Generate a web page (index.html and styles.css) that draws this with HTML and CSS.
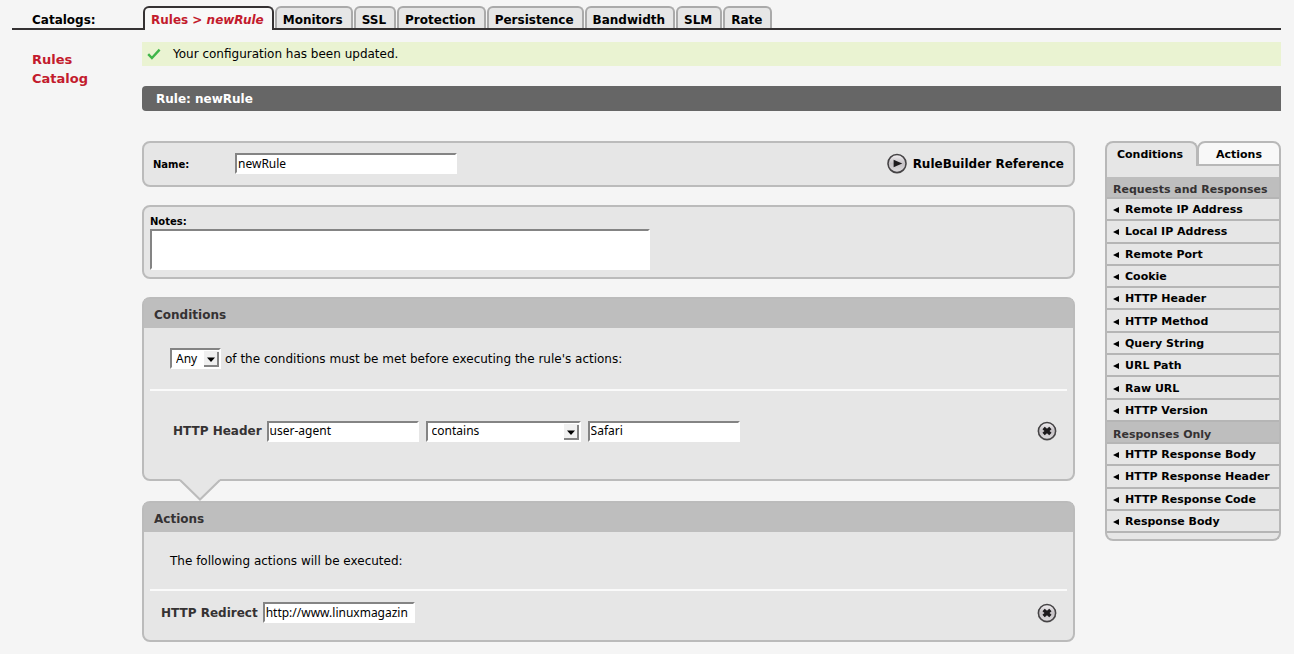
FILE: index.html
```html
<!DOCTYPE html>
<html lang="en">
<head>
    <meta charset="UTF-8">
    <meta name="viewport" content="width=device-width, initial-scale=1.0">
    <title>Rules &gt; newRule</title>
    <link rel="stylesheet" href="styles.css">
</head>
<body>

    <!-- shared icons -->
    <svg class="defs" aria-hidden="true">
        <defs>
            <linearGradient id="knob" x1="0" y1="0" x2="0" y2="1">
                <stop offset="0" stop-color="#f4f2f4"/>
                <stop offset="0.5" stop-color="#c4c0c4"/>
                <stop offset="1" stop-color="#dedcde"/>
            </linearGradient>
            <symbol id="icon-remove" viewBox="0 0 20 20">
                <circle cx="10" cy="10.5" r="9.3" fill="#a8a8a8"/>
                <circle cx="10" cy="10" r="8.6" fill="url(#knob)" stroke="#454345" stroke-width="1.5"/>
                <path d="M6.6 7 L13.4 13 M13.4 7 L6.6 13" stroke="#1c1a1c" stroke-width="3.4"/>
            </symbol>
            <symbol id="icon-play" viewBox="0 0 20 22">
                <circle cx="10" cy="11.3" r="9.4" fill="#999"/>
                <circle cx="10" cy="10.5" r="9" fill="url(#knob)" stroke="#454345" stroke-width="1.5"/>
                <path d="M6.6 6.8 L15.2 10.5 L6.6 14.2 Z" fill="#1c1a1c"/>
            </symbol>
        </defs>
    </svg>

    <nav class="catalogs">
        <span class="catalogs-label">Catalogs:</span>
        <a href="#" class="tab active">Rules &gt; <em>newRule</em></a>
        <a href="#" class="tab">Monitors</a>
        <a href="#" class="tab">SSL</a>
        <a href="#" class="tab">Protection</a>
        <a href="#" class="tab">Persistence</a>
        <a href="#" class="tab">Bandwidth</a>
        <a href="#" class="tab">SLM</a>
        <a href="#" class="tab">Rate</a>
    </nav>

    <div class="page">
        <div class="side-nav"><a href="#">Rules Catalog</a></div>

        <main>
            <div class="message">
                <svg width="14" height="12" viewBox="0 0 14 12" aria-hidden="true"><path d="M1.2 6.2 L4.9 10 L12.6 1.6" fill="none" stroke="#3fb549" stroke-width="2.4"/></svg>
                <span>Your configuration has been updated.</span>
            </div>

            <h1>Rule: newRule</h1>

            <div class="columns">
                <form class="rule">
                    <div class="panel name-panel">
                        <label for="name">Name:</label>
                        <input type="text" id="name" class="name-input" value="newRule">
                        <a href="#" class="reference">
                            <svg width="20" height="22" aria-hidden="true"><use href="#icon-play"/></svg>
                            RuleBuilder Reference
                        </a>
                    </div>

                    <div class="panel notes-panel">
                        <label for="notes">Notes:</label>
                        <textarea id="notes"></textarea>
                    </div>

                    <section class="panel conditions">
                        <h2>Conditions</h2>
                        <div class="intro">
                            <span class="select match">
                                <select id="match">
                                    <option>Any</option>
                                    <option>All</option>
                                </select>
                                <svg width="15" height="16" aria-hidden="true"><path d="M0 0H15V16H0Z" fill="#f0f0f0"/><path d="M13 1H15V16H0V14H13Z" fill="#848484"/><path d="M3 6.5H11L7 11Z"/></svg>
                            </span>
                            <label for="match">of the conditions must be met before executing the rule's actions:</label>
                        </div>
                        <div class="line">
                            <label for="header">HTTP Header</label>
                            <input type="text" id="header" value="user-agent">
                            <span class="select">
                                <select aria-label="Comparison">
                                    <option>contains</option>
                                    <option>equals</option>
                                </select>
                                <svg width="15" height="16" aria-hidden="true"><path d="M0 0H15V16H0Z" fill="#f0f0f0"/><path d="M13 1H15V16H0V14H13Z" fill="#848484"/><path d="M3 6.5H11L7 11Z"/></svg>
                            </span>
                            <input type="text" aria-label="Header value" value="Safari">
                            <button type="button" class="remove" aria-label="Remove condition"><svg width="20" height="20"><use href="#icon-remove"/></svg></button>
                        </div>
                        <svg class="pointer" width="42" height="22" viewBox="0 0 42 22" aria-hidden="true">
                            <path d="M1 0 H41 V2 L21 21 L1 2 Z" fill="#e6e6e6"/>
                            <path d="M1 1 L21 20.5 L41 1" fill="none" stroke="#bbb" stroke-width="2"/>
                        </svg>
                    </section>

                    <section class="panel actions">
                        <h2>Actions</h2>
                        <div class="intro">The following actions will be executed:</div>
                        <div class="line">
                            <label for="redirect">HTTP Redirect</label>
                            <input type="text" id="redirect" value="http://www.linuxmagazin">
                            <button type="button" class="remove" aria-label="Remove action"><svg width="20" height="20"><use href="#icon-remove"/></svg></button>
                        </div>
                    </section>
                </form>

                <aside>
                    <div class="aside-tabs">
                        <button type="button" class="current">Conditions</button>
                        <button type="button">Actions</button>
                    </div>
                    <div class="aside-body">
                        <h3>Requests and Responses</h3>
                        <ul class="requests">
                            <li><a href="#">Remote IP Address</a></li>
                            <li><a href="#">Local IP Address</a></li>
                            <li><a href="#">Remote Port</a></li>
                            <li><a href="#">Cookie</a></li>
                            <li><a href="#">HTTP Header</a></li>
                            <li><a href="#">HTTP Method</a></li>
                            <li><a href="#">Query String</a></li>
                            <li><a href="#">URL Path</a></li>
                            <li><a href="#">Raw URL</a></li>
                            <li><a href="#">HTTP Version</a></li>
                        </ul>
                        <h3>Responses Only</h3>
                        <ul class="responses">
                            <li><a href="#">HTTP Response Body</a></li>
                            <li><a href="#">HTTP Response Header</a></li>
                            <li><a href="#">HTTP Response Code</a></li>
                            <li><a href="#">Response Body</a></li>
                        </ul>
                    </div>
                </aside>
            </div>
        </main>
    </div>

</body>
</html>
```
FILE: styles.css
```css
* { box-sizing: border-box; }
body {
    margin: 0;
    padding: 6px 13px 12px 12px;
    background-color: #f5f5f5;
    color: black;
    font: 12px/18px "DejaVu Sans", Verdana, sans-serif;
}
a { color: inherit; text-decoration: none; }
h1, h2, h3, ul { margin: 0; padding: 0; }
.defs { position: absolute; width: 0; height: 0; }

/* top tabs */
.catalogs {
    display: flex;
    gap: 1px;
    height: 24px;
    border-bottom: 2px solid #353233;
    font-weight: bold;
}
.catalogs-label {
    width: 130px;
    padding: 5px 0 0 20px;
}
.tab {
    height: 22px;
    padding: 3px 8px 0 6px;
    border: 2px solid #aaa;
    border-bottom: none;
    border-radius: 6px 6px 0 0;
    background-color: #e6e6e6;
}
.tab.active {
    height: 24px;
    border-color: #353233;
    background-color: #f8f8f8;
    color: #c31b2d;
}

.page { display: flex; }
.side-nav {
    flex: none;
    width: 130px;
    padding: 20px 50px 0 20px;
    color: #c31b2d;
    font-size: 13px;
    line-height: 19px;
    font-weight: bold;
}
main {
    flex: 1;
    padding-top: 12px;
}

.message {
    display: flex;
    align-items: center;
    gap: 12px;
    height: 24px;
    padding-left: 5px;
    background-color: #eaf3d2;
}
h1 {
    height: 25px;
    margin: 20px 0 30px;
    padding-left: 14px;
    border-radius: 4px 0 0 4px;
    background-color: #666;
    color: white;
    font-size: 12px;
    line-height: 26px;
}

.columns {
    display: flex;
    align-items: flex-start;
    gap: 30px;
}
.rule {
    flex: 1;
    display: flex;
    flex-direction: column;
}
.panel {
    position: relative;
    border: 2px solid #bbb;
    border-radius: 8px;
    background-color: #e6e6e6;
}
h2 {
    padding: 3px 10px 0;
    height: 29px;
    background-color: #bebebe;
    color: #353233;
    font-size: 12px;
    line-height: 26px;
}

/* form fields */
input, select, textarea {
    border: 2px solid white;
    border-top-color: #848484;
    border-left-color: #848484;
    border-radius: 0;
    background-color: white;
    color: black;
    font: 12px/16px "Noto Sans", sans-serif;
}
input, select {
    width: 152px;
    height: 21px;
    padding: 0 1px 1px;
}
.select {
    position: relative;
    display: inline-flex;
}
select {
    appearance: none;
    width: 155px;
    padding: 0 4px;
}
.select svg {
    position: absolute;
    top: 3px;
    right: 2px;
    pointer-events: none;
}
.match select { width: 51px; }

.name-panel {
    display: flex;
    align-items: center;
    height: 46px;
    margin-bottom: 18px;
    padding: 0 9px 1px;
}
.name-panel label, .notes-panel label {
    font-size: 10px;
    font-weight: bold;
}
.name-panel label {
    width: 82px;
    padding-top: 2px;
}
.name-input { width: 222px; }
.reference {
    display: flex;
    align-items: center;
    gap: 6px;
    margin-left: auto;
    font-weight: bold;
}
.notes-panel {
    height: 74px;
    margin-bottom: 18px;
    padding: 8px 6px 6px;
}
.notes-panel label {
    display: block;
    line-height: 14px;
}
textarea {
    display: block;
    width: 500px;
    height: 41px;
    resize: none;
}

.intro {
    display: flex;
    align-items: center;
    gap: 4px;
    margin: 0 6px;
    padding-left: 20px;
    border-bottom: 2px solid #fafafa;
}
.line {
    display: flex;
    align-items: center;
    gap: 7px;
    padding-right: 16px;
}
.line label {
    margin-right: -2px;
    color: #353233;
    font-weight: bold;
}
.conditions { margin-bottom: 20px; }
.conditions .intro { height: 63px; }
.conditions .line {
    height: 88px;
    padding-left: 29px;
    padding-bottom: 8px;
}
.actions .intro { height: 59px; }
.actions .line {
    height: 49px;
    padding-left: 17px;
    padding-bottom: 6px;
}
.remove {
    width: 20px;
    height: 20px;
    margin-left: auto;
    padding: 0;
    border: none;
    background: none;
    cursor: pointer;
}
.remove svg { display: block; }
.pointer {
    position: absolute;
    left: 35px;
    top: 100%;
}

/* right column */
aside {
    flex: none;
    width: 176px;
    font-size: 11px;
    font-weight: bold;
}
.aside-tabs {
    display: flex;
    background: linear-gradient(#b8b8b8, #b8b8b8) left bottom / 2px 12px no-repeat, linear-gradient(#b8b8b8, #b8b8b8) right bottom / 2px 12px no-repeat;
}
.aside-tabs button {
    width: 84px;
    height: 25px;
    margin-left: -1px;
    padding: 2px 0 0;
    border: 2px solid #b8b8b8;
    border-radius: 8px 8px 0 0;
    background-color: #f8f8f8;
    color: black;
    font: bold 11px/18px "DejaVu Sans", Verdana, sans-serif;
}
.aside-tabs .current {
    width: 93px;
    margin-left: 0;
    padding: 0 3px 0 0;
    border-bottom: none;
    background-color: #e6e6e6;
}
.aside-body {
    padding: 11px 0 6px;
    border: 2px solid #b8b8b8;
    border-top: none;
    border-radius: 0 0 8px 8px;
    background-color: #e6e6e6;
}
h3 {
    height: 22px;
    padding: 3px 6px 0;
    border-bottom: 2px solid #b5b5b5;
    background-color: #bebebe;
    color: #353233;
    font-size: 11px;
    line-height: 20px;
}
aside ul {
    display: grid;
    grid-auto-rows: 1fr;
    list-style: none;
}
.requests { height: 223px; }
.responses { height: 89px; }
aside li { border-bottom: 2px solid #b5b5b5; }
aside li a {
    display: flex;
    align-items: center;
    height: 100%;
    gap: 6px;
    padding: 2px 0 0 6px;
    line-height: 18px;
}
aside li a::before {
    content: "";
    border: 3px solid transparent;
    border-left: none;
    border-right: 6px solid black;
}
```
